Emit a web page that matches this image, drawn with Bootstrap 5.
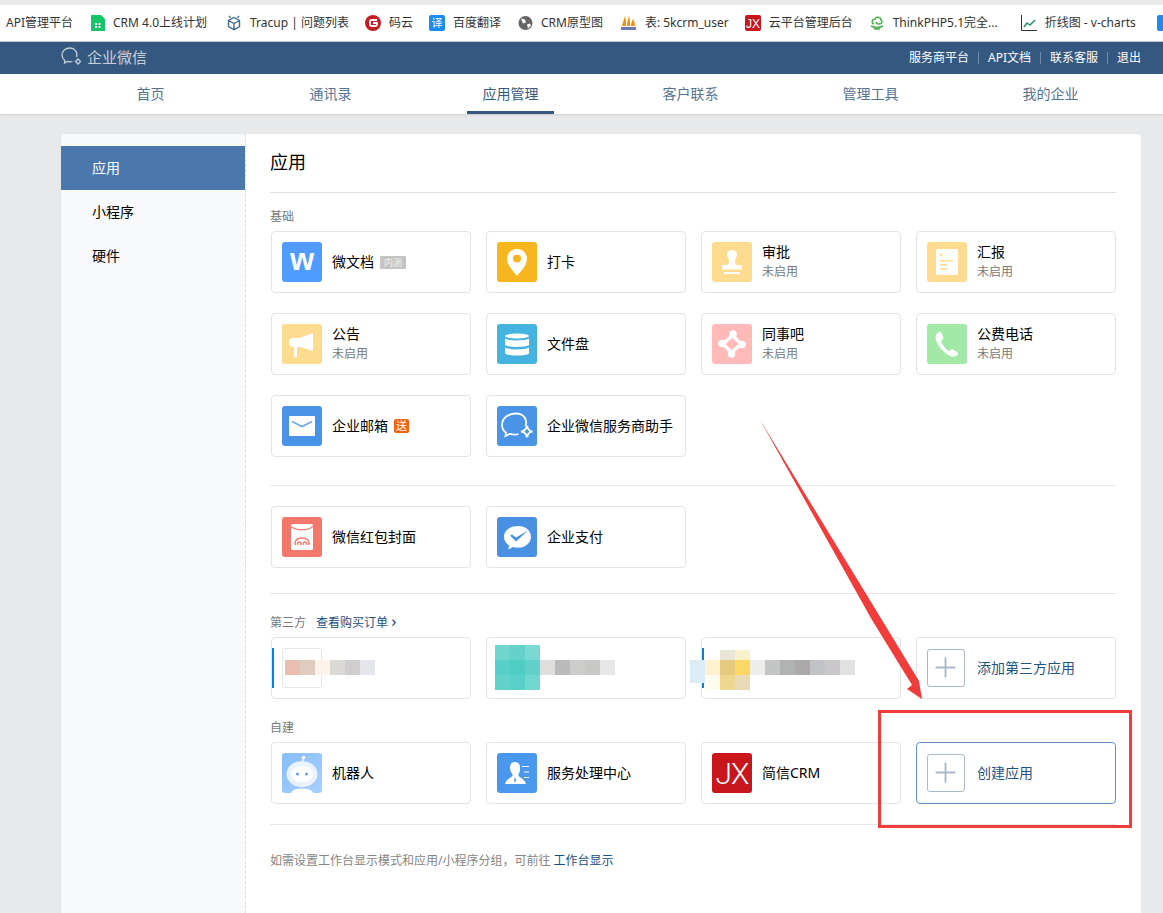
<!DOCTYPE html>
<html lang="zh-CN">
<head>
  <meta charset="UTF-8">
  <title>企业微信 - 应用管理</title>
  <link href="https://cdn.jsdelivr.net/npm/bootstrap@5.3.3/dist/css/bootstrap.min.css" rel="stylesheet">
  <style>
    html, body { height: 913px; overflow: hidden; }
    body {
      background: #e8e9eb;
      font-family: "Noto Sans", "Noto Sans CJK SC", sans-serif;
      font-size: 14px;
      line-height: 20px;
      color: #000;
      padding-top: 5px;
      position: relative;
    }

    .bm-bar { height: 37px; background: #fff; border-bottom: 1px solid #c4c6c7; gap: 16px; padding-left: 6px; overflow: hidden; white-space: nowrap; font-size: 12px; color: #333; }
    .bm-item { gap: 8px; flex: none; }
    .bm-item svg { flex: none; display: block; }
    .bm-item:nth-child(2) { margin-left: 2px; }
    .bm-item:nth-child(3) { margin-left: 3px; }
    .bm-item:nth-child(6), .bm-item:nth-child(7) { margin-left: 1px; }
    .bm-item:nth-child(10) { margin-left: 7px; }
    .bm-item:nth-child(11) { margin-left: 5px; }

    .top-head { height: 32px; background: #34587f; padding: 0 22px 0 61px; }
    .brand-box { margin-bottom: 2px; }
    .brand-txt { font-size: 15px; color: #c5d0dc; margin-left: 5px; }
    .head-links { font-size: 12px; color: #fff; }
    .head-links i { width: 1px; height: 12px; background: #6f8cab; margin: 0 9px; }

    .tab-bar { height: 40px; background: #fff; padding: 0 22px 0 60.6px; box-shadow: 0 1px 2px rgba(0,0,0,.12); }
    .tab-cell { width: 180px; text-align: center; color: #557392; line-height: 40px; }
    .tab-cell span { display: inline-block; height: 40px; padding: 0 15.5px; }
    .tab-cell.on span { border-bottom: 3px solid #34587f; color: #34587f; }

    .panel-wrap { margin: 20px 22px 0 61px; background: #fff; border-radius: 4px 4px 0 0; height: 800px; box-shadow: 0 0 2px rgba(0,0,0,.05); }
    .side-col { width: 185px; flex: none; background: #f8f9fb; border-right: 1px dashed #dcdde0; padding-top: 12px; border-radius: 4px 0 0 0; }
    .side-item { height: 44px; line-height: 44px; padding-left: 31px; }
    .side-item.on { background: #4a78ac; color: #fff; width: 184px; }

    .main-col { padding: 0 25px 0 24px; flex: 1; }
    .main-title { font-size: 18px; line-height: 24px; font-weight: 400; margin: 0; padding-top: 16px; height: 59px; border-bottom: 1px solid #dfdfdf; }
    .sec-label { font-size: 12px; line-height: 16px; color: #787878; margin-bottom: 6px; }
    .sec-label a { color: #1b4f82; text-decoration: none; margin-left: 10px; }
    .sec-label b { font-weight: 400; font-size: 17px; line-height: 0; }
    .sec-first { margin-top: 16px; }
    .sec-own { margin-top: 21px; }
    .app-grid { display: grid; grid-template-columns: repeat(4, 200px); gap: 20px 15px; margin-left: 1px; }
    .app-box { height: 62px; border: 1px solid #e4e4e4; border-radius: 4px; padding: 10px; gap: 10px; position: relative; background: #fff; overflow: visible; }
    .app-box.is-add { color: #1f5484; gap: 12px; }
    .app-box.is-hot { border-color: #5f93c9; }
    .app-ico { width: 40px; height: 40px; border-radius: 3px; flex: none; display: block; }
    .app-sub { font-size: 12px; line-height: 18px; color: #787878; margin: 1px 0 2px; }
    .plus-box { width: 38px; height: 38px; border: 1px solid #a9b8c9; border-radius: 3px; flex: none; }
    .tag-grey { font-size: 9px; line-height: 13px; background: #c4c4c4; color: #f1f1f1; padding: 0 4px; margin-left: 6px; border-radius: 1px; }
    .tag-orange { font-size: 11px; line-height: 14px; background: #f5630f; color: #fff; padding: 0 2px; margin-left: 6px; border-radius: 2px; }
    .thin-rule { height: 1px; background: #e6e6e6; }
    .rule-a { margin: 28px 0 20px; }
    .rule-b { margin: 25px 0 21px; }
    .rule-c { margin: 20px 0 28px; }
    .blue-tick { position: absolute; left: 0; top: 10px; width: 2px; height: 40px; background: #0a7fd6; }
    .ph-ico { width: 40px; height: 40px; border: 1px solid #e6e6e6; border-radius: 3px; }
    .mosaic { position: absolute; left: 0; top: 0; pointer-events: none; overflow: visible; }
    .foot-note { font-size: 12px; line-height: 16px; color: #858585; }
    .foot-note a { color: #1b4f82; text-decoration: none; }
    .red-frame { position: absolute; left: 878px; top: 710px; width: 254px; height: 118px; border: 3px solid #f13c3c; }
    .jx-txt { font-family: Roboto, "Liberation Sans", sans-serif; font-weight: 300; font-size: 30px; letter-spacing: -1px; fill: #fff; }
    .jx-mini { font-family: "Liberation Sans", sans-serif; font-size: 12px; fill: #fff; }
    .w-txt { font-family: "Liberation Sans", sans-serif; font-weight: 700; font-size: 31px; fill: #fff; }
  </style>
</head>
<body>

  <div class="bm-bar d-flex align-items-center">
    <div class="bm-item d-flex align-items-center">API管理平台</div>
    <div class="bm-item d-flex align-items-center">
      <svg width="14" height="16" viewBox="0 0 14 16"><path d="M0 0h10l4 4v12H0z" fill="#12c66a"/><path d="M4 8h2v2H4zM7.500 8h2v2h-2zM4 11h2v2H4zM7.500 11h2v2h-2z" fill="#fff"/></svg>
      CRM 4.0上线计划</div>
    <div class="bm-item d-flex align-items-center">
      <svg width="16" height="16" viewBox="0 0 16 16" fill="none" stroke="#3f6d92" stroke-width="1.400"><path d="M8 2.500l5.500 3v6L8 14.800l-5.500-3.300v-6zM2.500 5.500L8 8.500l5.500-3M8 8.500v6M3 .8l1.500 2M13 .8l-1.500 2"/></svg>
      Tracup | 问题列表</div>
    <div class="bm-item d-flex align-items-center">
      <svg width="16" height="16" viewBox="0 0 16 16"><circle cx="8" cy="8" r="8" fill="#c71d23"/><path d="M12 5H6.500A1.500 1.500 0 0 0 5 6.500v3A1.500 1.500 0 0 0 6.500 11h4a1.500 1.500 0 0 0 1.500-1.500V8H8" fill="none" stroke="#fff" stroke-width="1.800"/></svg>
      码云</div>
    <div class="bm-item d-flex align-items-center">
      <svg width="16" height="16" viewBox="0 0 16 16"><rect width="16" height="16" rx="2" fill="#1a8cf5"/><text x="8" y="12" text-anchor="middle" font-size="11" fill="#fff">译</text></svg>
      百度翻译</div>
    <div class="bm-item d-flex align-items-center">
      <svg width="15" height="16" viewBox="0 0 15 15"><circle cx="7.500" cy="7.500" r="7" fill="#666"/><path d="M3 3l4 1 1 3-3 1zM9 9l3-1 1 2-3 3z" fill="#fff"/></svg>
      CRM原型图</div>
    <div class="bm-item d-flex align-items-center">
      <svg width="17" height="16" viewBox="0 0 17 16"><path d="M2 11C3 7 4 4 5 1c1 3 1 6 1 10zM7 11c0-4 1-7 2-10 1 3 1 6 1 10zM11 11c0-3 1-5 2-7 1 2 2 4 2 7z" fill="#f29111"/><rect x="1" y="12" width="15" height="3" fill="#6c78af"/></svg>
      表: 5kcrm_user</div>
    <div class="bm-item d-flex align-items-center">
      <svg width="16" height="16" viewBox="0 0 16 16"><rect width="16" height="16" rx="2" fill="#c9161d"/><text x="8" y="12.500" text-anchor="middle" class="jx-mini">JX</text></svg>
      云平台管理后台</div>
    <div class="bm-item d-flex align-items-center">
      <svg width="16" height="16" viewBox="0 0 16 16" fill="none" stroke="#4cb050" stroke-width="1.500"><path d="M5 9C2 8 3 4 6 4c1-3 6-2 6 1 2 1 1 4-2 4-2 0-3-1-3-2M2 11c4 2 8 2 12 0M5 14h6"/></svg>
      ThinkPHP5.1完全...</div>
    <div class="bm-item d-flex align-items-center">
      <svg width="16" height="16" viewBox="0 0 16 16" fill="none"><path d="M.5 0v15.500H16" stroke="#333"/><path d="M3 12l3-4 3 2 5-5" stroke="#2f8f62" stroke-width="1.500"/></svg>
      折线图 - v-charts</div>
    <div class="bm-item d-flex align-items-center">
      <svg width="16" height="16" viewBox="0 0 16 16"><rect width="16" height="16" rx="2" fill="#1a8cf5"/></svg>
    </div>
  </div>

  <div class="top-head d-flex align-items-center justify-content-between">
    <div class="brand-box d-flex align-items-center">
      <svg width="21" height="20" viewBox="0 0 21 20" fill="none" stroke="#c5d0dc" stroke-width="1.300"><path d="M15.500 10C17 5 13.500 1 9 1 4.500 1 1 4 1 8c0 2.500 1.300 4.200 2.800 5.400L3.500 16l3-1.600c1.500.5 3.500.6 5 .1"/><path d="M17 12l2.500 2.500L17 17l-2.500-2.500z"/></svg>
      <span class="brand-txt">企业微信</span>
    </div>
    <div class="head-links d-flex align-items-center">
      <span>服务商平台</span><i></i><span>API文档</span><i></i><span>联系客服</span><i></i><span>退出</span>
    </div>
  </div>

  <div class="tab-bar d-flex">
    <div class="tab-cell"><span>首页</span></div>
    <div class="tab-cell"><span>通讯录</span></div>
    <div class="tab-cell on"><span>应用管理</span></div>
    <div class="tab-cell"><span>客户联系</span></div>
    <div class="tab-cell"><span>管理工具</span></div>
    <div class="tab-cell"><span>我的企业</span></div>
  </div>

  <div class="panel-wrap d-flex">
    <div class="side-col">
      <div class="side-item on">应用</div>
      <div class="side-item">小程序</div>
      <div class="side-item">硬件</div>
    </div>

    <div class="main-col">
      <h1 class="main-title">应用</h1>

      <div class="sec-label sec-first">基础</div>
      <div class="app-grid">
        <div class="app-box d-flex align-items-center">
          <svg class="app-ico" viewBox="0 0 40 40"><rect width="40" height="40" fill="#4f9bff"/><text x="20" y="28" text-anchor="middle" class="w-txt">w</text></svg>
          <div class="d-flex align-items-center">微文档<span class="tag-grey">内测</span></div>
        </div>
        <div class="app-box d-flex align-items-center">
          <svg class="app-ico" viewBox="0 0 40 40"><rect width="40" height="40" fill="#f8b61e"/><path d="M20 7c-6 0-10 4.500-10 10 0 6 6 12 10 17 4-5 10-11 10-17 0-5.500-4-10-10-10z" fill="#fff"/><circle cx="20" cy="16.500" r="4" fill="#f8b61e"/></svg>
          <div>打卡</div>
        </div>
        <div class="app-box d-flex align-items-center">
          <svg class="app-ico" viewBox="0 0 40 40"><rect width="40" height="40" fill="#fddb8f"/><path d="M20 8c-3 0-5 2-5 4.500 0 3 2 4 2 6.500 0 2-1 4-2 4h-5v4.500h20V23h-5c-1 0-2-2-2-4 0-2.500 2-3.500 2-6.500C25 10 23 8 20 8z" fill="#fff"/><rect x="12" y="30" width="16" height="2" fill="#fff"/></svg>
          <div><div>审批</div><div class="app-sub">未启用</div></div>
        </div>
        <div class="app-box d-flex align-items-center">
          <svg class="app-ico" viewBox="0 0 40 40"><rect width="40" height="40" fill="#fddb8f"/><rect x="9" y="7" width="22" height="26" rx="1" fill="#fff"/><circle cx="14" cy="13" r="1.500" fill="#fddb8f"/><path d="M13 18h13v1.500H13zM13 22h7v1.500h-7zM13 26h8v1.500h-8z" fill="#fddb8f"/></svg>
          <div><div>汇报</div><div class="app-sub">未启用</div></div>
        </div>

        <div class="app-box d-flex align-items-center">
          <svg class="app-ico" viewBox="0 0 40 40"><rect width="40" height="40" fill="#fddb8f"/><path d="M31 9v18l-13-4h-3v9a1.500 1.500 0 0 1-3 0v-9c-3 0-5-1.500-5-3.500V17c0-2 2-3 4-3h7z" fill="#fff"/></svg>
          <div><div>公告</div><div class="app-sub">未启用</div></div>
        </div>
        <div class="app-box d-flex align-items-center">
          <svg class="app-ico" viewBox="0 0 40 40"><rect width="40" height="40" fill="#45b3e0"/><ellipse cx="20" cy="12" rx="12" ry="2.500" fill="#fff"/><path d="M8 14.500c3 2.500 21 2.500 24 0v6.500c-3 2.500-21 2.500-24 0zM8 23.500c3 2.500 21 2.500 24 0v6c-3 2.800-21 2.800-24 0z" fill="#fff"/></svg>
          <div>文件盘</div>
        </div>
        <div class="app-box d-flex align-items-center">
          <svg class="app-ico" viewBox="0 0 40 40"><rect width="40" height="40" fill="#ffb9b7"/><g fill="none" stroke="#fff" stroke-width="3.500"><path d="M12 19l8-7M21 12l7 7M28 21l-8 7M19 28l-7-7"/></g><g fill="#fff"><circle cx="21" cy="10" r="3.800"/><circle cx="30" cy="20.500" r="3.800"/><circle cx="19.500" cy="30" r="3.800"/><circle cx="10" cy="19.500" r="3.800"/></g></svg>
          <div><div>同事吧</div><div class="app-sub">未启用</div></div>
        </div>
        <div class="app-box d-flex align-items-center">
          <svg class="app-ico" viewBox="0 0 40 40"><rect width="40" height="40" fill="#a2e8a7"/><path d="M12 8c-2 1-4 3-3.500 6 1 7 8 15 15 18 2.500 1 5 1 7-1 1-1 .5-2-.5-3l-4-2.500c-1-.5-2-.3-3 1-.7.8-2 .5-3-.5-2-2-4-5-5.500-7.500-.5-1-.3-2 .7-2.700 1.500-1 1.500-2 1-3l-2-4.500c-.5-1-1.500-1.300-2.700-.3z" fill="#fff"/></svg>
          <div><div>公费电话</div><div class="app-sub">未启用</div></div>
        </div>

        <div class="app-box d-flex align-items-center">
          <svg class="app-ico" viewBox="0 0 40 40"><rect width="40" height="40" fill="#4a94e8"/><rect x="7" y="10" width="26" height="20" rx="1" fill="#fff"/><path d="M10 15.500l10 5 10-5" fill="none" stroke="#6ea9ea" stroke-width="1.600"/></svg>
          <div class="d-flex align-items-center">企业邮箱<span class="tag-orange">送</span></div>
        </div>
        <div class="app-box d-flex align-items-center">
          <svg class="app-ico" viewBox="0 0 40 40"><rect width="40" height="40" fill="#4a94e8"/><g fill="none" stroke="#fff" stroke-width="1.800"><path d="M28.500 20C31 13 26 7.500 19 7.500 11 7.500 5 12.500 5 19c0 3.500 1.800 6 4 7.800L8.500 30l4.500-2.200c2.500.8 6 1 8.500.2"/><path d="M30 21.500l3.500 4-3.500 4-4-4z"/></g><g fill="#fff"><circle cx="30" cy="21" r="1.600"/><circle cx="34" cy="25.500" r="1.600"/><circle cx="30" cy="30" r="1.600"/><circle cx="25.500" cy="25.500" r="1.600"/></g></svg>
          <div>企业微信服务商助手</div>
        </div>
      </div>

      <div class="thin-rule rule-a"></div>

      <div class="app-grid">
        <div class="app-box d-flex align-items-center">
          <svg class="app-ico" viewBox="0 0 40 40"><rect width="40" height="40" fill="#f4776b"/><rect x="9" y="7" width="22" height="26" rx="1.500" fill="#fff"/><path d="M9 9.500c6 4.500 16 4.500 22 0" fill="none" stroke="#f4776b" stroke-width="1.200"/><path d="M13.500 28c-1.500-3 .5-7 6.500-7s8 4 6.500 7M18.500 28c1-1 .5-3-1.500-3s-2 2.500-.5 2.500M21.500 28c-1-1-.5-3 1.500-3s2 2.500.5 2.500" fill="none" stroke="#f4776b" stroke-width="1.400"/></svg>
          <div>微信红包封面</div>
        </div>
        <div class="app-box d-flex align-items-center">
          <svg class="app-ico" viewBox="0 0 40 40"><rect width="40" height="40" fill="#4a90e2"/><path d="M21 9c-8 0-14 4.800-14 11 0 3.500 2 6.500 5 8.500l-.5 4 4.500-2.500c1.500.5 3.200.7 5 .7 7.500 0 13-5 13-11S28.500 9 21 9z" fill="#fff"/><path d="M13 18.500l2-1 4 3 12-7-12 11z" fill="#4a90e2"/></svg>
          <div>企业支付</div>
        </div>
      </div>

      <div class="thin-rule rule-b"></div>

      <div class="sec-label">第三方<a href="#">查看购买订单 <b>›</b></a></div>
      <div class="app-grid">
        <div class="app-box d-flex align-items-center">
          <span class="blue-tick"></span><div class="ph-ico"></div>
          <svg class="mosaic" width="200" height="62"><rect x="13" y="22" width="15" height="15" fill="#e9bdb0"/><rect x="28" y="22" width="15" height="15" fill="#e0ccbe"/><rect x="43" y="22" width="15" height="15" fill="#fdf3ea"/><rect x="58" y="22" width="15" height="15" fill="#dbd9d5"/><rect x="73" y="22" width="15" height="15" fill="#cfcdcd"/><rect x="88" y="22" width="15" height="15" fill="#e5e6eb"/></svg>
        </div>
        <div class="app-box d-flex align-items-center">
          <svg class="mosaic" width="200" height="62"><rect x="8" y="7" width="15" height="15" fill="#70d5ce"/><rect x="23" y="7" width="15" height="15" fill="#64d2ca"/><rect x="38" y="7" width="15" height="15" fill="#7ad9d2"/><rect x="8" y="22" width="15" height="15" fill="#56cfc8"/><rect x="23" y="22" width="15" height="15" fill="#4ecdc5"/><rect x="38" y="22" width="15" height="15" fill="#60d0c9"/><rect x="8" y="37" width="15" height="15" fill="#62d2cb"/><rect x="23" y="37" width="15" height="15" fill="#58cfc8"/><rect x="38" y="37" width="15" height="15" fill="#72d7d0"/><rect x="53" y="22" width="15" height="15" fill="#e0dedc"/><rect x="68" y="22" width="15" height="15" fill="#b9bab9"/><rect x="83" y="22" width="15" height="15" fill="#cdcdcc"/><rect x="98" y="22" width="15" height="15" fill="#c8c8c7"/><rect x="113" y="22" width="15" height="15" fill="#e8e7e7"/></svg>
        </div>
        <div class="app-box d-flex align-items-center">
          <span class="blue-tick"></span>
          <svg class="mosaic" width="200" height="62"><rect x="-12" y="22" width="15" height="23" fill="#dbecf7"/><rect x="3" y="22" width="15" height="15" fill="#fdf1cf"/><rect x="18" y="12" width="15" height="10" fill="#e9e5d8"/><rect x="33" y="12" width="15" height="10" fill="#fbf0cc"/><rect x="18" y="22" width="15" height="15" fill="#e5c97f"/><rect x="33" y="22" width="15" height="15" fill="#fbd766"/><rect x="18" y="37" width="15" height="15" fill="#f0d78f"/><rect x="33" y="37" width="15" height="15" fill="#e9dab5"/><rect x="3" y="37" width="15" height="15" fill="#fefbf1"/><rect x="48" y="22" width="15" height="15" fill="#ededec"/><rect x="63" y="22" width="15" height="15" fill="#c4c5c5"/><rect x="78" y="22" width="15" height="15" fill="#b1b2b2"/><rect x="93" y="22" width="15" height="15" fill="#ada9aa"/><rect x="108" y="22" width="15" height="15" fill="#c1c2c6"/><rect x="123" y="22" width="15" height="15" fill="#cac7ca"/><rect x="138" y="22" width="15" height="15" fill="#e1e1e1"/></svg>
        </div>
        <div class="app-box is-add d-flex align-items-center">
          <svg class="plus-box" viewBox="0 0 38 38"><path d="M8 18.500h21M18.500 8v21" stroke="#a9b8cb" stroke-width="2"/></svg>
          <div>添加第三方应用</div>
        </div>
      </div>

      <div class="sec-label sec-own">自建</div>
      <div class="app-grid">
        <div class="app-box d-flex align-items-center">
          <svg class="app-ico" viewBox="0 0 40 40"><defs><linearGradient id="robotBg" x1="0" y1="0" x2="1" y2="1"><stop offset="0" stop-color="#85bdfb"/><stop offset="1" stop-color="#a9d0fb"/></linearGradient></defs><rect width="40" height="40" fill="url(#robotBg)"/><path d="M21 4v8" stroke="#fff" stroke-width="1.200"/><circle cx="21.500" cy="4.500" r="1.800" fill="#fff"/><ellipse cx="20" cy="21" rx="15.500" ry="13" fill="#e9f2fd"/><ellipse cx="20" cy="21" rx="11" ry="8" fill="#fff"/><circle cx="15.500" cy="21" r="1.500" fill="#5f9ef5"/><circle cx="24.500" cy="21" r="1.500" fill="#5f9ef5"/><ellipse cx="20" cy="40" rx="11" ry="4.500" fill="#fff"/></svg>
          <div>机器人</div>
        </div>
        <div class="app-box d-flex align-items-center">
          <svg class="app-ico" viewBox="0 0 40 40"><rect width="40" height="40" fill="#4a98ee"/><path d="M18 9c-3 0-5 2-5 5.500 0 3 1 5 2.500 6.500v2C13 25 9 27 8 31h21c-1-4-5-6-7.500-8v-2C23 19.500 23 17 23 14.500 23 11 21 9 18 9z" fill="#fff"/><path d="M18 24l-1 3 1 3 1-3z" fill="#4a98ee"/><path d="M25 13.500h7M27 19h5M27 24.500h5" stroke="#fff" stroke-width="1.200"/></svg>
          <div>服务处理中心</div>
        </div>
        <div class="app-box d-flex align-items-center">
          <svg class="app-ico" viewBox="0 0 40 40"><rect width="40" height="40" fill="#c9161d"/><text x="20" y="31" text-anchor="middle" class="jx-txt">JX</text></svg>
          <div>简信CRM</div>
        </div>
        <div class="app-box is-add is-hot d-flex align-items-center">
          <svg class="plus-box" viewBox="0 0 38 38"><path d="M8 18.500h21M18.500 8v21" stroke="#a9b8cb" stroke-width="2"/></svg>
          <div>创建应用</div>
        </div>
      </div>

      <div class="thin-rule rule-c"></div>
      <div class="foot-note">如需设置工作台显示模式和应用/小程序分组，可前往 <a href="#">工作台显示</a></div>
    </div>
  </div>

  <!-- annotations drawn on top of the screenshot -->
  <div class="red-frame"></div>
  <svg class="mosaic" width="1163" height="913"><polygon points="760,420 882,620 919,681 922,699 907,689 912,685 872,620" fill="#f13c3c"/></svg>

</body>
</html>
